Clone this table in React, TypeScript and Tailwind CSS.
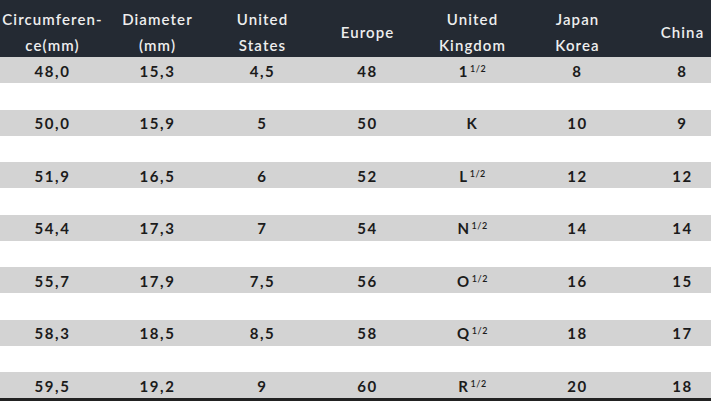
const headers: string[][] = [
  ["Circumferen-", "ce(mm)"],
  ["Diameter", "(mm)"],
  ["United", "States"],
  ["Europe"],
  ["United", "Kingdom"],
  ["Japan", "Korea"],
  ["China"],
];

// [circ, diameter, us, eu, uk letter, uk half, jp, cn]
const rows: [string, string, string, string, string, boolean, string, string][] = [
  ["48,0", "15,3", "4,5", "48", "1", true, "8", "8"],
  ["50,0", "15,9", "5", "50", "K", false, "10", "9"],
  ["51,9", "16,5", "6", "52", "L", true, "12", "12"],
  ["54,4", "17,3", "7", "54", "N", true, "14", "14"],
  ["55,7", "17,9", "7,5", "56", "O", true, "16", "15"],
  ["58,3", "18,5", "8,5", "58", "Q", true, "18", "17"],
  ["59,5", "19,2", "9", "60", "R", true, "20", "18"],
];

const Cell = ({ children }: { children: React.ReactNode }) => (
  <div className="w-[105px] shrink-0 flex items-center justify-center pt-[2px]">
    {children}
  </div>
);

const App = () => {
  return (
    <div className="w-[711px] h-[402px] overflow-hidden bg-white font-['Lato',sans-serif]">
      <div className="w-[735px]">
        {/* header */}
        <div className="flex h-[57px] bg-[#242a33] pt-[7px] text-[#eeeeee] text-[15px] font-semibold tracking-[1.1px]">
          {headers.map((h, i) => (
            <div
              key={i}
              className="w-[105px] shrink-0 flex flex-col items-center justify-center text-center leading-[26px]"
            >
              {h.map((line, j) => (
                <span key={j}>{line}</span>
              ))}
            </div>
          ))}
        </div>

        {/* body */}
        {rows.map((r, i) => (
          <div key={i}>
            {i > 0 && <div className="h-[26.5px]" />}
            <div className="flex h-[26px] bg-[#d3d3d3] text-[#1b1b1b] text-[15px] font-bold tracking-[1.6px]">
              <Cell>{r[0]}</Cell>
              <Cell>{r[1]}</Cell>
              <Cell>{r[2]}</Cell>
              <Cell>{r[3]}</Cell>
              <Cell>
                <span className="whitespace-nowrap">
                  {r[4]}
                  {r[5] && (
                    <span className="relative top-[-5px] ml-[1px] text-[9px] font-semibold tracking-[0.5px]">
                      1/2
                    </span>
                  )}
                </span>
              </Cell>
              <Cell>{r[6]}</Cell>
              <Cell>{r[7]}</Cell>
            </div>
          </div>
        ))}
        <div className="h-[3px] bg-[#222]" />
      </div>
    </div>
  );
};

export default App;
